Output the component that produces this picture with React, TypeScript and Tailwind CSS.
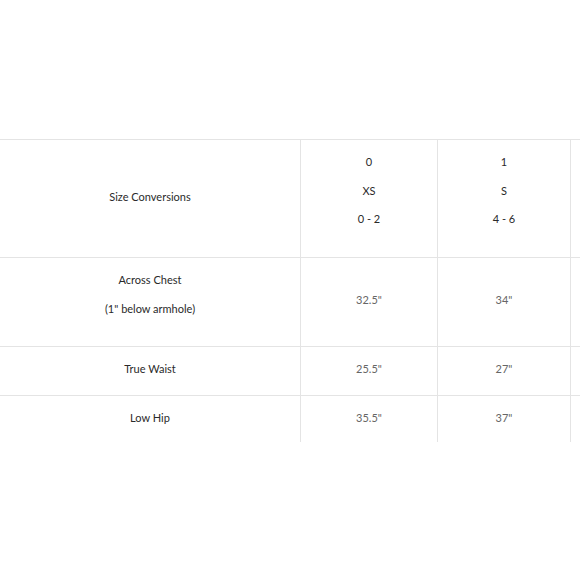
import React from "react";

const cols = "grid-cols-[301px_137px_133px_137px]";

export default function App() {
  const line = "border-[#e4e4e4]";
  return (
    <div className="w-[580px] h-[580px] bg-white overflow-hidden" style={{ fontFamily: "Lato, 'Open Sans', sans-serif" }}>
      <div className="h-[139px]" />
      <div className={`grid ${cols} w-[708px] border-t ${line} text-[11px] text-[#2a2a2a]`}>
        {/* header row */}
        <div className={`h-[118px] border-r border-b ${line} flex items-center justify-center pb-[2px]`}>Size Conversions</div>
        <div className={`h-[118px] border-r border-b ${line} flex flex-col items-center pt-[8px] leading-[28.5px]`}>
          <span>0</span><span>XS</span><span>0 - 2</span>
        </div>
        <div className={`h-[118px] border-r border-b ${line} flex flex-col items-center pt-[8px] leading-[28.5px]`}>
          <span>1</span><span>S</span><span>4 - 6</span>
        </div>
        <div className={`h-[118px] border-r border-b ${line}`} />
        {/* chest */}
        <div className={`h-[89px] border-r border-b ${line} flex flex-col items-center pt-[7px] leading-[29px]`}>
          <span>Across Chest</span><span>(1" below armhole)</span>
        </div>
        <div className={`h-[89px] border-r border-b ${line} flex items-center justify-center pb-[3px] text-[#666]`}>32.5"</div>
        <div className={`h-[89px] border-r border-b ${line} flex items-center justify-center pb-[3px] text-[#666]`}>34"</div>
        <div className={`h-[89px] border-r border-b ${line}`} />
        {/* waist */}
        <div className={`h-[49px] border-r border-b ${line} flex items-center justify-center pb-[3px]`}>True Waist</div>
        <div className={`h-[49px] border-r border-b ${line} flex items-center justify-center pb-[3px] text-[#666]`}>25.5"</div>
        <div className={`h-[49px] border-r border-b ${line} flex items-center justify-center pb-[3px] text-[#666]`}>27"</div>
        <div className={`h-[49px] border-r border-b ${line}`} />
        {/* hip */}
        <div className={`h-[46px] border-r ${line} flex items-center justify-center pb-[2px]`}>Low Hip</div>
        <div className={`h-[46px] border-r ${line} flex items-center justify-center pb-[2px] text-[#666]`}>35.5"</div>
        <div className={`h-[46px] border-r ${line} flex items-center justify-center pb-[2px] text-[#666]`}>37"</div>
        <div className={`h-[46px] border-r ${line}`} />
      </div>
    </div>
  );
}
